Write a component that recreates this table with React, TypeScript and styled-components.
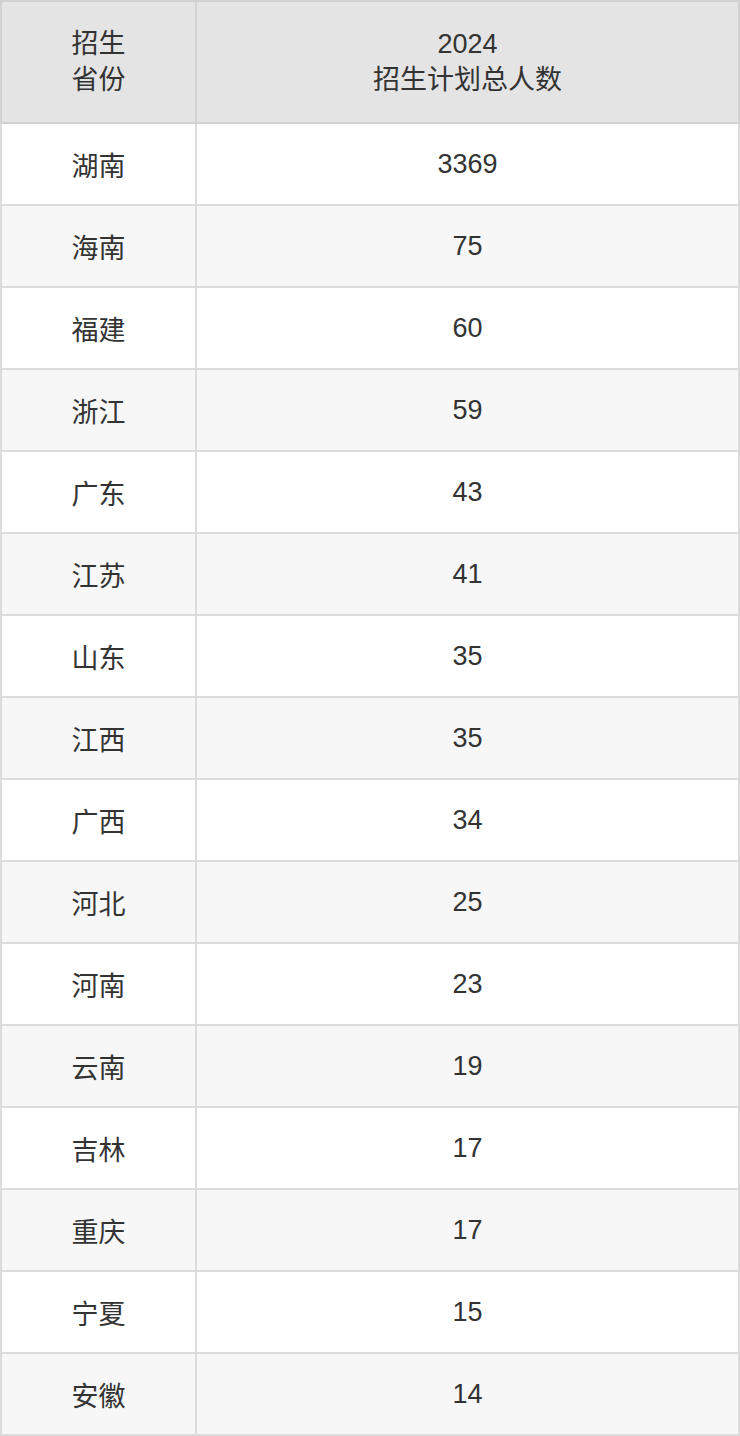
import React from 'react';
import styled, { createGlobalStyle } from 'styled-components';

const rows: [string, number][] = [
  ['湖南', 3369],
  ['海南', 75],
  ['福建', 60],
  ['浙江', 59],
  ['广东', 43],
  ['江苏', 41],
  ['山东', 35],
  ['江西', 35],
  ['广西', 34],
  ['河北', 25],
  ['河南', 23],
  ['云南', 19],
  ['吉林', 17],
  ['重庆', 17],
  ['宁夏', 15],
  ['安徽', 14],
];

const GlobalStyle = createGlobalStyle`
  body {
    margin: 0;
    background: #fff;
    font-family: "Liberation Sans", Arial, "Noto Sans CJK SC", sans-serif;
  }
`;

const Table = styled.table`
  width: 740px;
  border-collapse: collapse;
  color: #333;
  font-size: 27px;
  table-layout: fixed;
`;

const HeadCell = styled.th<{ $w?: number }>`
  width: ${(p) => (p.$w ? `${p.$w}px` : 'auto')};
  height: 120px;
  background: #e4e4e4;
  border: 2px solid #d2d2d2;
  font-weight: normal;
  line-height: 36px;
  text-align: center;
  padding: 0;
`;

const Row = styled.tr<{ $alt: boolean }>`
  background: ${(p) => (p.$alt ? '#f7f7f7' : '#ffffff')};
`;

const Cell = styled.td`
  height: 80px;
  border: 2px solid #dcdcdc;
  text-align: center;
  padding: 0;
`;

const App: React.FC = () => {
  return (
    <>
      <GlobalStyle />
      <Table>
        <thead>
          <tr>
            <HeadCell $w={193}>
              招生
              <br />
              省份
            </HeadCell>
            <HeadCell>
              2024
              <br />
              招生计划总人数
            </HeadCell>
          </tr>
        </thead>
        <tbody>
          {rows.map(([name, count], i) => (
            <Row key={name} $alt={i % 2 === 1}>
              <Cell>{name}</Cell>
              <Cell>{count}</Cell>
            </Row>
          ))}
        </tbody>
      </Table>
    </>
  );
};

export default App;
